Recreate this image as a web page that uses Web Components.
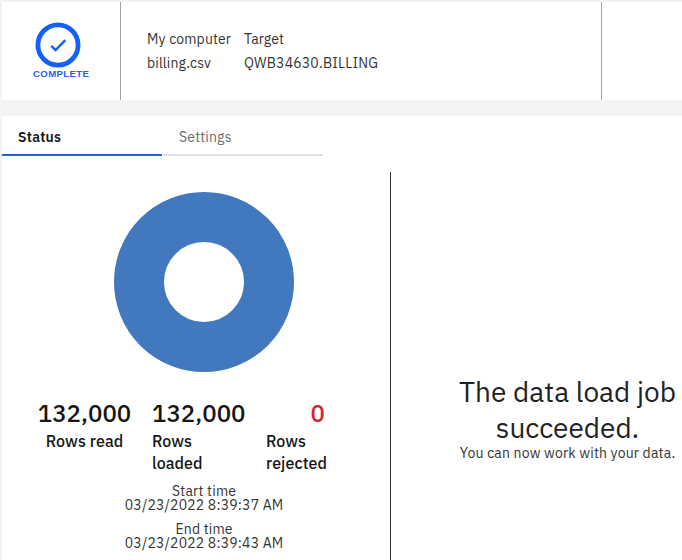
<!DOCTYPE html>
<html lang="en">
<head>
<meta charset="utf-8">
<title>Load job</title>
<style>
html,body{margin:0;height:100%;overflow:hidden;background:#f3f3f3}
body{font-family:"IBM Plex Sans","Noto Sans",Roboto,sans-serif;color:#161616}
</style>
</head>
<body>
<load-page></load-page>
<script>
// One line of text, tracked so that it fills the width in its "w" attribute.
class TextLine extends HTMLElement{
  connectedCallback(){
    const root=this.attachShadow({mode:'open'});
    root.innerHTML=`<style>:host{display:block;white-space:nowrap;width:max-content}span{display:inline-block}</style><span><slot></slot></span>`;
    const span=root.querySelector('span'),w=+this.getAttribute('w'),n=this.textContent.length;
    const gap=(w-span.getBoundingClientRect().width)/Math.max(1,n-1);
    span.style.letterSpacing=gap+'px';
    span.style.marginRight=-gap+'px';
  }
}
class StatusBadge extends HTMLElement{
  connectedCallback(){
    this.attachShadow({mode:'open'}).innerHTML=`<style>
:host{display:flex;flex-direction:column;align-items:center;box-sizing:border-box;width:119px;padding-top:20px;border-right:1px solid #a2a2a2;color:#2862e4}
svg{display:block;width:46px;height:46px;margin-right:6px}
text-line{font:700 9.6px/12px "Liberation Sans",Arial,sans-serif}
</style><svg viewBox="0 0 46 46" fill="none" stroke="#1560f5"><circle cx="23" cy="23" r="20.1" stroke-width="4.8"/><path d="M16.2 23.9 20.6 28 30.3 18.2" stroke-width="2.4"/></svg><text-line w="56">COMPLETE</text-line>`;
  }
}
class JobHeader extends HTMLElement{
  connectedCallback(){
    this.attachShadow({mode:'open'}).innerHTML=`<style>
:host{display:flex;height:98px;background:#fff}
.info{flex:0 0 481px;box-sizing:border-box;border-right:1px solid #a2a2a2;padding:25px 0 0 26px;display:grid;grid-template-columns:97px auto;grid-auto-rows:24px;justify-content:start;font-size:14px;line-height:24px;color:#343434}
status-badge{flex:none}
</style><status-badge></status-badge><div class="info"><text-line w="84">My computer</text-line><text-line w="40">Target</text-line><text-line w="64">billing.csv</text-line><text-line w="134">QWB34630.BILLING</text-line></div>`;
  }
}
class TabBar extends HTMLElement{
  connectedCallback(){
    this.attachShadow({mode:'open'}).innerHTML=`<style>
:host{display:flex;gap:1px;height:40px;font-size:14px;line-height:20px}
div{box-sizing:border-box;width:160px;padding:11px 16px 0;border-bottom:2px solid #e0e0e0;color:#6a6a6a}
.on{border-color:#2560d9;color:#161616;font-weight:600}
</style><div class="on"><text-line w="43">Status</text-line></div><div><text-line w="52.5">Settings</text-line></div>`;
  }
}
class DonutChart extends HTMLElement{
  connectedCallback(){
    this.attachShadow({mode:'open'}).innerHTML=`<style>:host,svg{display:block;width:180px;height:180px}</style><svg viewBox="0 0 180 180"><circle cx="90" cy="90" r="65" fill="none" stroke="#4178be" stroke-width="50"/></svg>`;
  }
}
class RowStat extends HTMLElement{
  connectedCallback(){
    this.attachShadow({mode:'open'}).innerHTML=`<style>
:host{display:flex;flex-direction:column;align-items:flex-start;font-weight:500;font-size:16px;line-height:22px}
::slotted([slot=value]){font-size:24px;line-height:32px;font-weight:500;margin-bottom:1px}
</style><slot name="value"></slot><slot></slot>`;
  }
}
class TimeEntry extends HTMLElement{
  connectedCallback(){
    this.attachShadow({mode:'open'}).innerHTML=`<style>:host{display:flex;flex-direction:column;align-items:center;font-size:14px;line-height:14px;color:#343434}</style><slot></slot>`;
  }
}
class LoadSummary extends HTMLElement{
  connectedCallback(){
    this.attachShadow({mode:'open'}).innerHTML=`<style>
:host{display:flex;flex-direction:column;align-items:center;box-sizing:border-box;width:389px;padding:20px 0 0;border-right:1px solid #303030}
donut-chart{margin-left:16px}
.stats{display:grid;grid-template-columns:93px 93px 61px;gap:21px;align-self:flex-start;margin:25px 0 10px 36px}
.centre{align-items:center}.rej [slot]{align-self:flex-end;margin-right:2px;color:#d12530}
time-entry{margin:0 0 10px 16px}
</style><donut-chart></donut-chart><div class="stats">
<row-stat class="centre"><text-line slot="value" w="93.5">132,000</text-line><text-line w="77.5">Rows read</text-line></row-stat>
<row-stat><text-line slot="value" w="93.5">132,000</text-line><text-line w="40">Rows</text-line><text-line w="50.5">loaded</text-line></row-stat>
<row-stat class="rej"><text-line slot="value" w="14">0</text-line><text-line w="40">Rows</text-line><text-line w="61">rejected</text-line></row-stat></div>
<time-entry><text-line w="64">Start time</text-line><text-line w="158.5">03/23/2022 8:39:37 AM</text-line></time-entry>
<time-entry><text-line w="57">End time</text-line><text-line w="158.5">03/23/2022 8:39:43 AM</text-line></time-entry>`;
  }
}
class JobResult extends HTMLElement{
  connectedCallback(){
    this.attachShadow({mode:'open'}).innerHTML=`<style>
:host{display:flex;flex-direction:column;align-items:center;padding:202px 0 0 68px;flex:none;width:217px}
.big{font-size:28px;line-height:36px;color:#222}
.small{font-size:14px;line-height:14px;color:#343434}
</style><text-line class="big" w="217">The data load job</text-line><text-line class="big" w="143.5">succeeded.</text-line><text-line class="small" w="215.5">You can now work with your data.</text-line>`;
  }
}
class LoadPage extends HTMLElement{
  connectedCallback(){
    this.attachShadow({mode:'open'}).innerHTML=`<style>
:host{display:flex;flex-direction:column;gap:16px;height:560px;box-sizing:border-box;padding:2px 0 0 2px}
main{flex:1;background:#fff;display:flex;flex-direction:column;min-height:0}
.body{display:flex;flex:1;min-height:0;margin-top:16px}
load-summary{flex:none}
</style><job-header></job-header><main><tab-bar></tab-bar><div class="body"><load-summary></load-summary><job-result></job-result></div></main>`;
  }
}
for(const [n,c] of [['text-line',TextLine],['status-badge',StatusBadge],['job-header',JobHeader],['tab-bar',TabBar],['donut-chart',DonutChart],['row-stat',RowStat],['time-entry',TimeEntry],['load-summary',LoadSummary],['job-result',JobResult],['load-page',LoadPage]])customElements.define(n,c);
</script>
</body>
</html>
